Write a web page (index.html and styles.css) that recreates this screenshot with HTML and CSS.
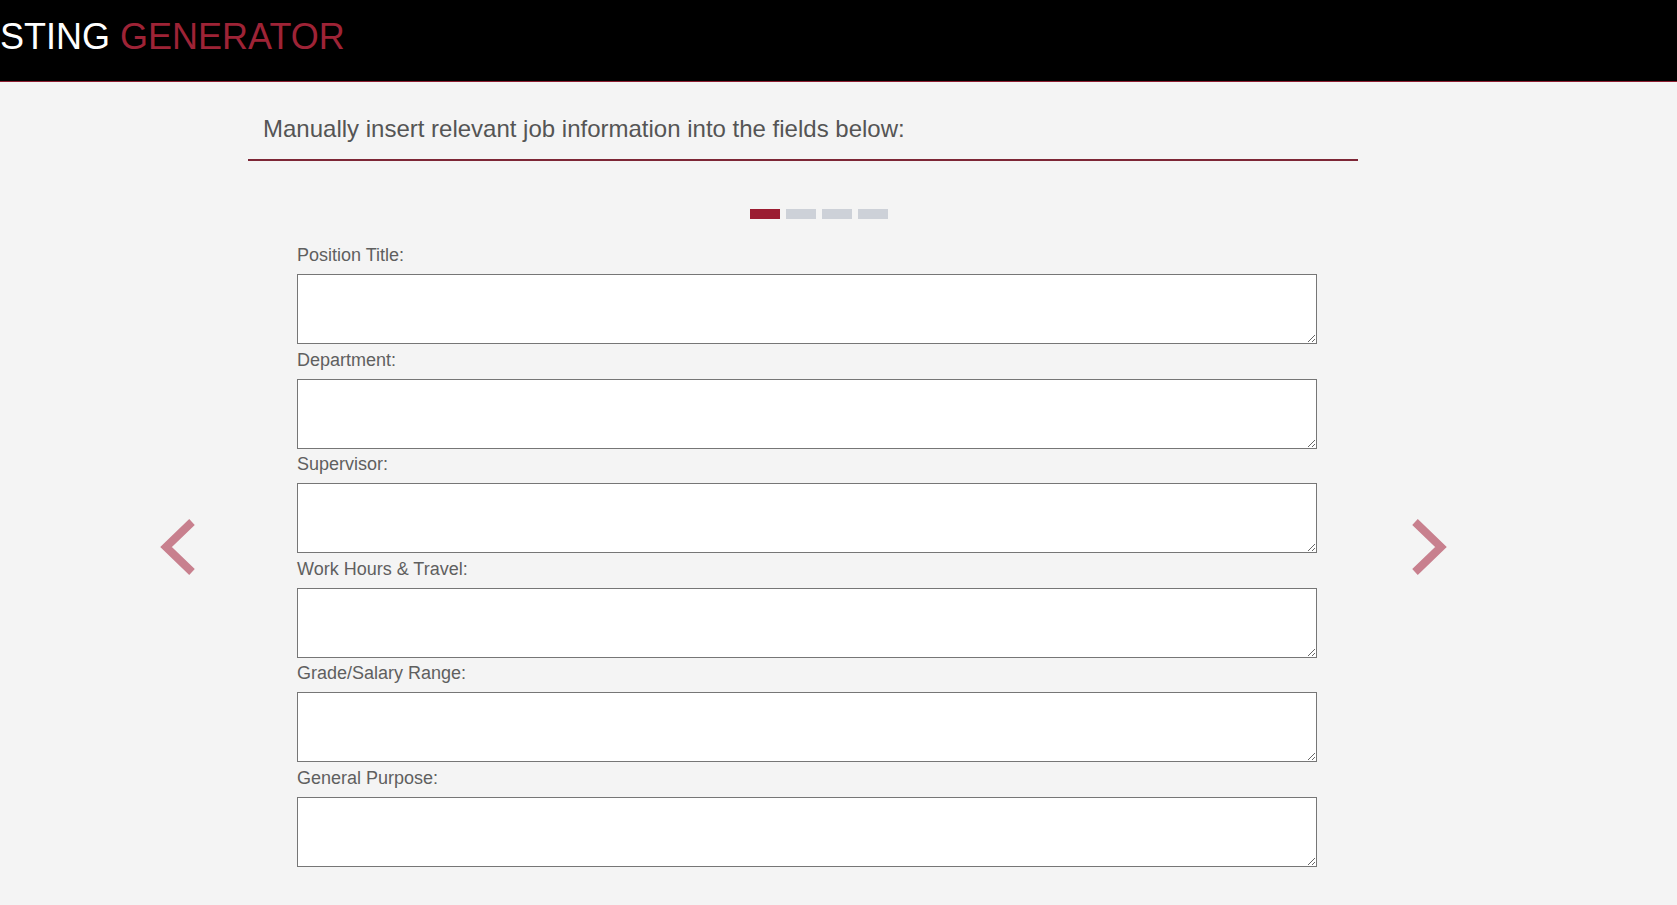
FILE: index.html
```html
<!DOCTYPE html>
<html lang="en">
<head>
<meta charset="utf-8">
<title>Job Posting Generator</title>
<link rel="stylesheet" href="styles.css">
</head>
<body>
<header class="topbar">
  <div class="brand"><span class="brand-white">STING</span> <span class="brand-red">GENERATOR</span></div>
</header>
<main class="page">
  <h2 class="intro">Manually insert relevant job information into the fields below:</h2>
  <div class="carousel">
    <div class="indicators">
      <span class="dot active"></span>
      <span class="dot"></span>
      <span class="dot"></span>
      <span class="dot"></span>
    </div>
    <form class="fields">
      <label class="field-label" for="f1">Position Title:</label>
      <textarea class="field-input" id="f1"></textarea>
      <label class="field-label" for="f2">Department:</label>
      <textarea class="field-input" id="f2"></textarea>
      <label class="field-label" for="f3">Supervisor:</label>
      <textarea class="field-input" id="f3"></textarea>
      <label class="field-label" for="f4">Work Hours &amp; Travel:</label>
      <textarea class="field-input" id="f4"></textarea>
      <label class="field-label" for="f5">Grade/Salary Range:</label>
      <textarea class="field-input" id="f5"></textarea>
      <label class="field-label" for="f6">General Purpose:</label>
      <textarea class="field-input" id="f6"></textarea>
    </form>
  </div>
  <a class="control control-prev" aria-label="Previous">
    <svg width="42" height="60" viewBox="0 0 42 60"><polyline points="34,5 8,30 34,55" fill="none" stroke="#c8808e" stroke-width="8" stroke-linejoin="miter"/></svg>
  </a>
  <a class="control control-next" aria-label="Next">
    <svg width="42" height="60" viewBox="0 0 42 60"><polyline points="8,5 34,30 8,55" fill="none" stroke="#c8808e" stroke-width="8" stroke-linejoin="miter"/></svg>
  </a>
</main>
</body>
</html>
```

FILE: styles.css
```css
html, body {
  margin: 0;
  padding: 0;
}
body {
  background: #f4f4f4;
  font-family: "Liberation Sans", Arial, sans-serif;
  overflow: hidden;
}
.topbar {
  background: #000;
  height: 81px;
  border-bottom: 1px solid #8e1f31;
  box-sizing: content-box;
}
.brand {
  font-size: 36px;
  line-height: 40px;
  padding-top: 17px;
  white-space: nowrap;
}
.brand-white {
  color: #fff;
}
.brand-red {
  color: #9e2336;
}
.page {
  position: relative;
  width: 1110px;
  margin-left: 248px;
  padding-top: 33px;
}
.intro {
  margin: 0;
  padding: 0 0 16px 15px;
  font-size: 24px;
  line-height: 28px;
  font-weight: normal;
  color: #555;
  border-bottom: 2px solid #7d2636;
}
.indicators {
  display: flex;
  gap: 6px;
  margin: 48px 0 0 502px;
}
.dot {
  width: 30px;
  height: 10px;
  background: #cdd1d8;
}
.dot.active {
  background: #9b1c31;
}
.fields {
  margin: 25px 0 0 49px;
  width: 1020px;
}
.field-label {
  display: block;
  font-size: 18px;
  line-height: 20px;
  color: #5f5f5f;
  padding-top: 1px;
  margin-bottom: 9px;
}
.field-input {
  display: block;
  box-sizing: border-box;
  width: 1020px;
  height: 70px;
  margin: 0 0 4.6px 0;
  border: 1px solid #767676;
  background: #fff;
  border-radius: 0;
  padding: 2px;
  font-family: inherit;
}
.control {
  position: absolute;
  top: 435px;
  display: block;
  width: 42px;
  height: 60px;
}
.control svg {
  display: block;
}
.control-prev {
  left: -90px;
}
.control-next {
  left: 1159px;
}
```
